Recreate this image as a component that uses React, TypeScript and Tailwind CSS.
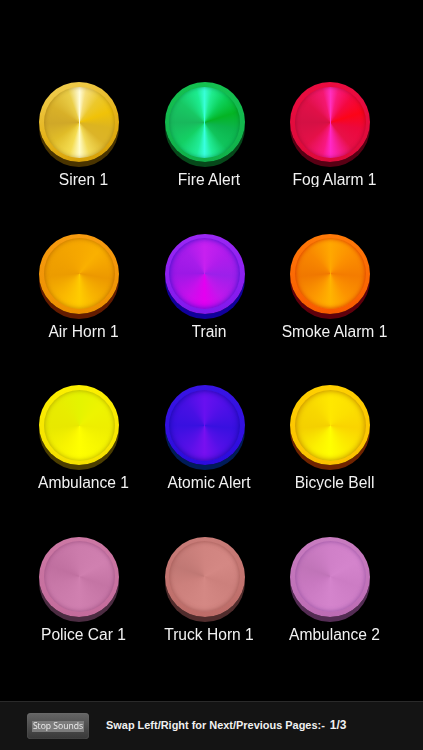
import React from "react";

type Item = { name: string; ring: string; disc: string };

const items: Item[] = [
  {
    name: "Siren 1",
    ring: "bg-[linear-gradient(160deg,#f2d258,#e4b218_55%,#d49c04)] shadow-[0_5px_0_#4a3400]",
    disc: "bg-[conic-gradient(#fffcd8_0deg,#f6de78_12deg,#ecc82c_38deg,#f0c208_70deg,#dcb420_100deg,#dcb428_130deg,#f2da58_162deg,#fffcc8_180deg,#f4dc50_198deg,#e0bc28_235deg,#d0a828_268deg,#d8b028_300deg,#eace48_340deg,#fffcd8_360deg)] shadow-[inset_0_0_4px_rgba(120,80,0,0.45)]",
  },
  {
    name: "Fire Alert",
    ring: "bg-[linear-gradient(180deg,#14c050,#10b04a)] shadow-[0_5px_0_#06481a]",
    disc: "bg-[conic-gradient(#38ffd8_0deg,#20ec90_14deg,#0cd058_40deg,#04b424_72deg,#0cb44c_102deg,#10c45c_140deg,#20ec98_166deg,#38ffe0_180deg,#20ec98_194deg,#14d064_228deg,#18b85c_270deg,#18c864_310deg,#1cec90_346deg,#38ffd8_360deg)] shadow-[inset_0_0_4px_rgba(0,90,40,0.5)]",
  },
  {
    name: "Fog Alarm 1",
    ring: "bg-[linear-gradient(180deg,#ea0c40,#dc0a3a)] shadow-[0_5px_0_#580014]",
    disc: "bg-[conic-gradient(#ff30c0_0deg,#f81878_14deg,#f40840_40deg,#fc0418_72deg,#ec083c_102deg,#e81048_140deg,#f820a0_168deg,#ff28c8_180deg,#f81880_194deg,#e41048_228deg,#d41044_270deg,#e01048_310deg,#f41870_346deg,#ff30c0_360deg)] shadow-[inset_0_0_4px_rgba(120,0,30,0.5)]",
  },
  {
    name: "Air Horn 1",
    ring: "bg-[linear-gradient(180deg,#f89c10,#ec9000)] shadow-[0_5px_0_#641c00]",
    disc: "bg-[conic-gradient(#f6a800_0deg,#fab000_40deg,#f4a400_70deg,#ec9800_100deg,#f8b400_150deg,#ffcc00_180deg,#fab800_215deg,#ec9c00_265deg,#f0a000_300deg,#f6a800_360deg)] shadow-[inset_0_0_5px_rgba(150,70,0,0.6)]",
  },
  {
    name: "Train",
    ring: "bg-[linear-gradient(180deg,#9a28f4,#8018ec)] shadow-[0_5px_0_#10009c]",
    disc: "bg-[conic-gradient(#c820f0_0deg,#b01cec_50deg,#9c20ea_95deg,#c018ec_145deg,#e400f0_180deg,#c810ec_215deg,#9c18e6_270deg,#a81cea_320deg,#c820f0_360deg)] shadow-[inset_0_0_6px_#3410c8]",
  },
  {
    name: "Smoke Alarm 1",
    ring: "bg-[linear-gradient(180deg,#ff7a08,#f85a00)] shadow-[0_5px_0_#60000c]",
    disc: "bg-[conic-gradient(#ffa800_0deg,#fc9000_45deg,#f47c00_95deg,#fc9400_145deg,#ffb400_180deg,#fc9800_215deg,#f07800_265deg,#f88800_315deg,#ffa800_360deg)] shadow-[inset_0_0_5px_#d83000]",
  },
  {
    name: "Ambulance 1",
    ring: "bg-[linear-gradient(180deg,#fcf000,#f4e000)] shadow-[0_5px_0_#4c3e00]",
    disc: "bg-[conic-gradient(#e4f400_0deg,#eef400_50deg,#eeee00_95deg,#f8f800_145deg,#ffff00_180deg,#f8f400_215deg,#e8e800_265deg,#e8ec00_315deg,#e4f400_360deg)] shadow-[inset_0_0_5px_rgba(150,130,0,0.7)]",
  },
  {
    name: "Atomic Alert",
    ring: "bg-[linear-gradient(180deg,#3814e4,#2c0cdc)] shadow-[0_5px_0_#001c58]",
    disc: "bg-[conic-gradient(#6810f0_0deg,#5010e8_45deg,#3810e0_95deg,#5410e8_145deg,#7810f0_180deg,#5810e8_215deg,#3810e0_270deg,#4810e4_320deg,#6810f0_360deg)] shadow-[inset_0_0_6px_#1008a0]",
  },
  {
    name: "Bicycle Bell",
    ring: "bg-[linear-gradient(180deg,#ffd000,#fcc000)] shadow-[0_5px_0_#702400]",
    disc: "bg-[conic-gradient(#ffe800_0deg,#fce000_50deg,#fad400_95deg,#fcec00_145deg,#ffff00_180deg,#fcf000_215deg,#f4d000_265deg,#f8d800_315deg,#ffe800_360deg)] shadow-[inset_0_0_6px_#b87800]",
  },
  {
    name: "Police Car 1",
    ring: "bg-[linear-gradient(180deg,#cc78a4,#c46c9c)] shadow-[0_5px_0_#4c2c42]",
    disc: "bg-[conic-gradient(#cc7cac_0deg,#d080b0_60deg,#c474a4_110deg,#d080b0_180deg,#c878a8_250deg,#c070a0_290deg,#cc7cac_360deg)] shadow-[inset_0_0_5px_#9c5080]",
  },
  {
    name: "Truck Horn 1",
    ring: "bg-[linear-gradient(180deg,#c87c78,#bc6c68)] shadow-[0_5px_0_#502c2c]",
    disc: "bg-[conic-gradient(#d08480_0deg,#d48884_60deg,#cc807c_110deg,#d48884_180deg,#cc807c_250deg,#c07874_290deg,#d08480_360deg)] shadow-[inset_0_0_5px_#9c5450]",
  },
  {
    name: "Ambulance 2",
    ring: "bg-[linear-gradient(180deg,#c87cc0,#bc6cb4)] shadow-[0_5px_0_#542c54]",
    disc: "bg-[conic-gradient(#d080c8_0deg,#d484cc_60deg,#cc7cc4_110deg,#d484cc_180deg,#c878c0_250deg,#c074b8_290deg,#d080c8_360deg)] shadow-[inset_0_0_5px_#9450a0]",
  },
];

export default function App() {
  return (
    <div className="w-[423px] h-[750px] bg-black flex flex-col overflow-hidden font-['Liberation_Sans',Arial,sans-serif]">
      <main className="flex-1 pt-[82px] pl-[16.5px]">
        <div className="grid grid-cols-[repeat(3,125.5px)] auto-rows-[151.67px]">
          {items.map((it) => (
            <div key={it.name} className="flex flex-col items-center w-[125px]">
              <div className={`w-[80px] h-[80px] shrink-0 rounded-full p-[4.5px] ${it.ring}`}>
                <div className={`w-full h-full rounded-full blur-[0.4px] ${it.disc}`} />
              </div>
              <div className="mt-[8px] ml-[9px] h-[16.5px] overflow-hidden text-[15.6px] leading-[20px] text-[#f2f2f2] whitespace-nowrap blur-[0.25px]">
                {it.name}
              </div>
            </div>
          ))}
        </div>
      </main>
      <footer className="h-[49px] shrink-0 bg-[#141414] border-t border-[#2a2a2a] flex items-center pl-[27px]">
        <button className="w-[62px] h-[26px] rounded-[4px] bg-[linear-gradient(180deg,#666666,#4e4e4e_50%,#383838)] flex items-center justify-center shadow-[inset_0_0_1px_#888888]">
          <span className="px-[1px] bg-[#7c7c7c] text-[#eeeeee] text-[8.6px] font-medium leading-[11px] font-['Open_Sans',sans-serif] whitespace-nowrap blur-[0.2px]">
            Stop Sounds
          </span>
        </button>
        <span className="ml-[17px] text-[10.95px] font-bold text-[#f0f0f0] whitespace-nowrap mt-[-2px]">
          Swap Left/Right for Next/Previous Pages:-
        </span>
        <span className="ml-[5px] text-[12px] font-bold text-[#f0f0f0] mt-[-2px]">1/3</span>
      </footer>
    </div>
  );
}
